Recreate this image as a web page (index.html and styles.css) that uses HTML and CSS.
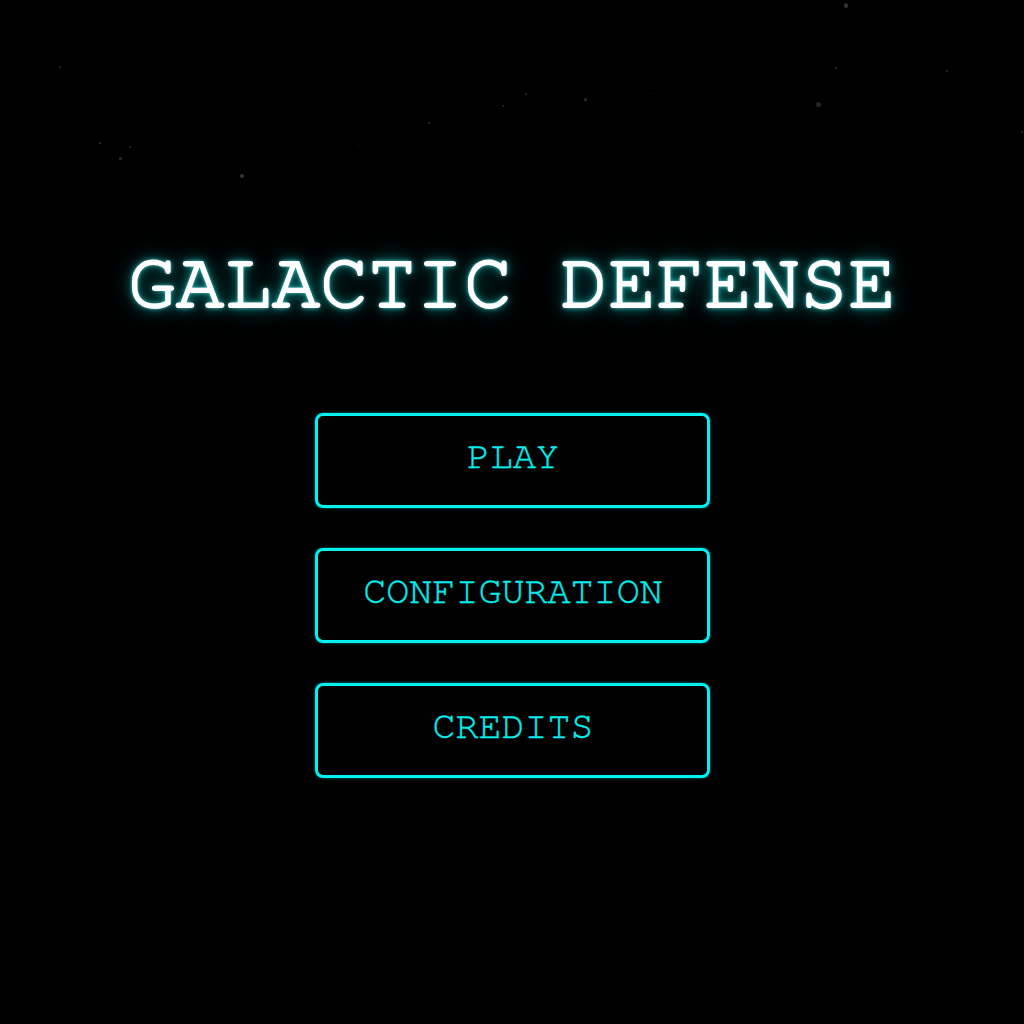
FILE: index.html
```html
<!DOCTYPE html>
<html lang="en">
<head>
<meta charset="utf-8">
<title>Galactic Defense</title>
<link rel="stylesheet" href="styles.css">
</head>
<body>
<div class="sky">
  <span class="star s1"></span><span class="star s2"></span><span class="star s3"></span>
  <span class="star s4"></span><span class="star s5"></span><span class="star s6"></span>
  <span class="star s7"></span><span class="star s8"></span><span class="star s9"></span>
  <span class="star s10"></span><span class="star s11"></span><span class="star s12"></span>
  <span class="star s13"></span><span class="star s14"></span><span class="star s15"></span>
  <span class="star s16"></span>
</div>
<main class="menu">
  <h1 class="title">GALACTIC DEFENSE</h1>
  <nav class="buttons">
    <button class="btn">PLAY</button>
    <button class="btn">CONFIGURATION</button>
    <button class="btn">CREDITS</button>
  </nav>
</main>
</body>
</html>
```
FILE: styles.css
```css
html, body {
  margin: 0;
  padding: 0;
  background: #000;
  height: 100%;
}
body {
  position: relative;
  overflow: hidden;
  font-family: "FreeMono", "Courier New", monospace;
}
.sky {
  position: absolute;
  inset: 0;
}
.star {
  position: absolute;
  width: 2px;
  height: 2px;
  border-radius: 50%;
  background: #2e2e2e;
}
.s1 { left: 59px; top: 66px; }
.s2 { left: 99px; top: 142px; }
.s3 { left: 129px; top: 146px; }
.s4 { left: 119px; top: 157px; width: 3px; height: 3px; }
.s5 { left: 240px; top: 174px; width: 4px; height: 4px; background: #333; }
.s6 { left: 358px; top: 145px; width: 1px; height: 1px; }
.s7 { left: 428px; top: 122px; }
.s8 { left: 502px; top: 105px; }
.s9 { left: 844px; top: 3px; width: 4px; height: 5px; background: #333; }
.s10 { left: 835px; top: 67px; }
.s11 { left: 946px; top: 70px; }
.s12 { left: 525px; top: 93px; }
.s13 { left: 584px; top: 98px; width: 3px; height: 3px; }
.s14 { left: 650px; top: 93px; width: 1px; height: 1px; }
.s15 { left: 816px; top: 102px; width: 5px; height: 5px; background: #262626; }
.s16 { left: 1021px; top: 131px; }

.menu {
  position: relative;
  display: flex;
  flex-direction: column;
  align-items: center;
  padding-top: 238px;
}
.title {
  margin: 0;
  font-family: "FreeMono", "Courier New", monospace;
  font-weight: normal;
  font-size: 80px;
  line-height: 90px;
  color: #fff;
  -webkit-text-stroke: 2.2px #fff;
  text-shadow: 0 0 4px #8ff, 0 0 10px #00c4c4, 0 0 20px #008585, 0 0 34px #005050;
}
.buttons {
  display: flex;
  flex-direction: column;
  gap: 40px;
  margin-top: 85px;
}
.btn {
  width: 395px;
  height: 95px;
  background: transparent;
  border: 3px solid #00f2f2;
  border-radius: 8px;
  color: #00f0f0;
  font-family: "FreeMono", "Courier New", monospace;
  font-size: 38.4px;
  padding: 0 0 9px 2px;
  -webkit-text-stroke: 0.4px #00f0f0;
  box-shadow: 0 0 3px rgba(0, 255, 255, 0.5);
}
```
